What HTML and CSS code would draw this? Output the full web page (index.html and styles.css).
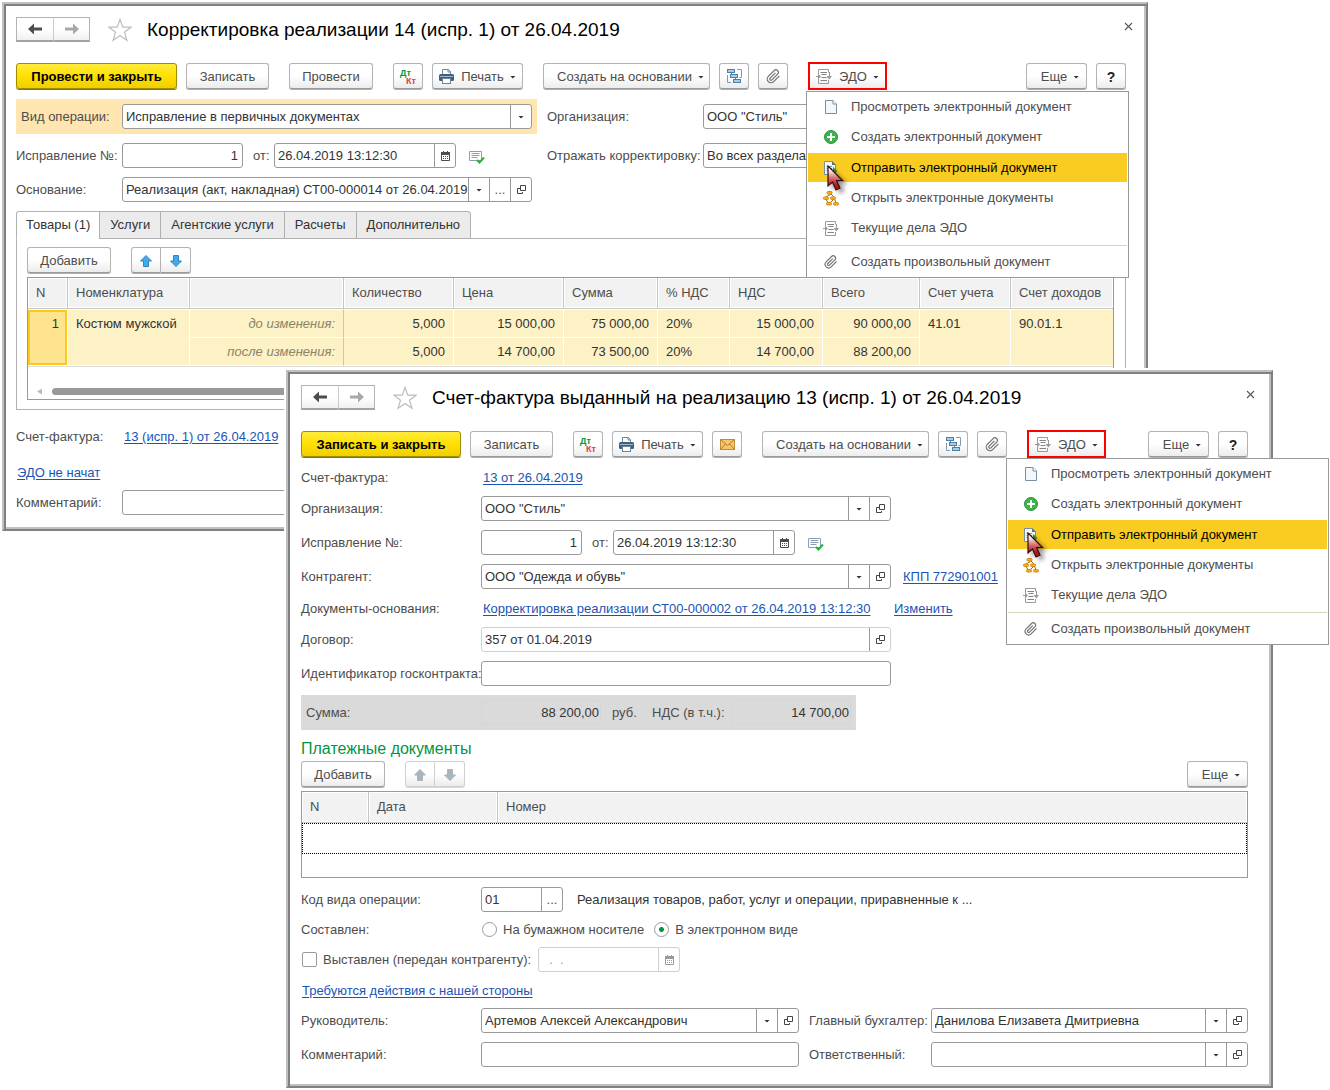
FILE: index.html
```html
<!DOCTYPE html>
<html lang="ru">
<head>
<meta charset="utf-8">
<meta name="viewport" content="width=device-width, initial-scale=1">
<title>Корректировка реализации</title>
<link rel="stylesheet" href="styles.css">
</head>
<body>
<svg class="sprite" aria-hidden="true">
  <symbol id="i-back" viewBox="0 0 14 12"><path d="M0 6 6 .5V4.500H14V7.500H6V11.500z" fill="currentColor"/></symbol>
  <symbol id="i-forward" viewBox="0 0 14 12"><path d="M14 6 8 .5V4.500H0V7.500H8V11.500z" fill="currentColor"/></symbol>
  <symbol id="i-star" viewBox="0 0 24 24"><path d="M12 1.500 14.800 9.200H23L16.500 14.200 18.900 22.200 12 17.400 5.100 22.200 7.500 14.200 1 9.200H9.200z" fill="#fff" stroke="#b9bdc1" stroke-width="1.200"/></symbol>
  <symbol id="i-close" viewBox="0 0 9 9"><path d="M1 1 8 8M8 1 1 8" stroke="#555" stroke-width="1.100"/></symbol>
  <symbol id="i-print" viewBox="0 0 15 15"><path d="M3.500 5V.5H9.500L11.500 2.500V5" fill="#fff" stroke="#6f8496"/><path d="M9 1V3H11.500" fill="none" stroke="#6f8496"/><rect x="0" y="5" width="15" height="7" rx="1.500" fill="#3a6287"/><rect x="1" y="7" width="13" height="1" fill="#9fb8cc"/><rect x="3.500" y="9.500" width="8" height="5" fill="#fff" stroke="#6f8496"/></symbol>
  <symbol id="i-tree" viewBox="0 0 15 15"><path d="M10 .5H14.500V8.500H12.500M.5 6V13.500H4" fill="none" stroke="#7d9cb3"/><path d="M4.500 4V6M8.500 9V11" stroke="#4e7fa5"/><rect x=".5" y=".5" width="7" height="3" fill="#a9cbe4" stroke="#4e7fa5"/><rect x="3.500" y="5.500" width="7" height="3" fill="#a9cbe4" stroke="#4e7fa5"/><rect x="6.500" y="10.500" width="7" height="3" fill="#a9cbe4" stroke="#4e7fa5"/></symbol>
  <symbol id="i-clip" viewBox="0 0 24 24"><path d="M21.440 11.050l-9.190 9.190a6 6 0 0 1-8.490-8.490l9.190-9.190a4 4 0 0 1 5.660 5.660l-9.200 9.190a2 2 0 0 1-2.830-2.830l8.490-8.480" fill="none" stroke="#6f6f6f" stroke-width="1.900"/></symbol>
  <symbol id="i-edo" viewBox="0 0 16 15"><path d="M2.500 5V.5H12.500V3.500M2.500 10V14.500H12.500V11" fill="none" stroke="#999"/><path d="M4.500 3.500H11M5.500 5.500H10.500M5.500 8.500H10.500M4.500 11.500H11" stroke="#858585"/><path d="M0 7.500H3M13.500 3V8" stroke="#999"/><path d="M2 4.500 5 7.500 2 10.500zM10.500 7H16L13.300 10.500z" fill="#999"/></symbol>
  <symbol id="i-mail" viewBox="0 0 15 11"><rect x=".5" y=".5" width="14" height="10" fill="#f6c56c" stroke="#c78a33"/><path d="M1 1 7.500 6.500 14 1M1 10 5.500 5M14 10 9.500 5" fill="none" stroke="#b87a28"/></symbol>
  <symbol id="i-cal" viewBox="0 0 9 10"><path d="M.5 2.500V9.500H8.500V2.500" fill="none" stroke="currentColor"/><path d="M0 1H9V4H0zM2 0H3V1H2zM6 0H7V1H6z" fill="currentColor"/><path d="M2 5.500H3M4 5.500H5M6 5.500H7M2 7.500H3M4 7.500H5M6 7.500H7" stroke="currentColor"/></symbol>
  <symbol id="i-list" viewBox="0 0 16 13"><path d="M.5.5H12.500V9.500H.5z" fill="#fff" stroke="#8a9fb3"/><path d="M2.500 2.500H10.500M2.500 4.500H10.500M2.500 6.500H8.500" stroke="#8a9fb3"/><path d="M8 9 10.500 11.500 15 6.500" fill="none" stroke="#2eae3c" stroke-width="2"/></symbol>
  <symbol id="i-open" viewBox="0 0 9 9"><path d="M3.500.5H8.500V5.500H3.500zM3.500 3.500H.5V8.500H5.500V7" fill="none" stroke="#444"/></symbol>
  <symbol id="i-up" viewBox="0 0 12 12"><path d="M6 .5 11.500 6H8.500V11.500H3.500V6H.5z" fill="var(--arrow)" stroke="var(--arrow-edge)"/></symbol>
  <symbol id="i-down" viewBox="0 0 12 12"><path d="M6 11.500 .5 6H3.500V.5H8.500V6H11.500z" fill="var(--arrow)" stroke="var(--arrow-edge)"/></symbol>
  <symbol id="i-doc" viewBox="0 0 12 14"><path d="M.5.5H8L11.500 4V13.500H.5z" fill="#f4f8fb" stroke="#7b8fa3"/><path d="M8 .5V4H11.500" fill="#fff" stroke="#7b8fa3"/></symbol>
  <symbol id="i-add" viewBox="0 0 14 14"><circle cx="7" cy="7" r="6.500" fill="#3db34c" stroke="#2b9639"/><path d="M7 3V11M3 7H11" stroke="#fff" stroke-width="2"/></symbol>
  <symbol id="i-send" viewBox="0 0 14 14"><path d="M.5.5H8L11.500 4V13.500H.5z" fill="#f4f8fb" stroke="#7b8fa3"/><path d="M8 0V4H12z" fill="#5e7388"/><path d="M2.500 5.500H8M2.500 7.500H8M2.500 9.500H8" stroke="#6c9ac0"/><path d="M9 6 13.500 10 9 13.500z" fill="#25a838"/></symbol>
  <symbol id="i-org" viewBox="0 0 16 15"><path d="M8 3 3 6M8 3 11 6M3 8 5 12M11 8 7 12M11.500 8 13 12" stroke="#9a6a1c" fill="none"/><g fill="#f9ae1b" stroke="#d98a0e"><rect x="4" y=".5" width="5" height="2.500" rx="1"/><rect x=".5" y="6" width="5" height="2.500" rx="1"/><rect x="7.500" y="6" width="5" height="2.500" rx="1"/><rect x="3.500" y="11.500" width="5" height="2.500" rx="1"/><rect x="10.500" y="11.500" width="5" height="2.500" rx="1"/></g></symbol>
  <symbol id="i-cursor" viewBox="0 0 24 32"><defs><linearGradient id="red" x1="0" y1="0" x2="0" y2="1"><stop offset=".15" stop-color="#fff"/><stop offset=".5" stop-color="#d87070"/><stop offset=".8" stop-color="#b01818"/></linearGradient></defs><path d="M1 1V21L5.500 17 9 25 13 23 9.500 15.500H15.500z" fill="url(#red)" stroke="#3a0a0a" stroke-width="1.200"/></symbol>
</svg>

<main class="desktop">

<section class="window window--back" aria-labelledby="t1">
  <header class="head">
    <div class="nav"><button type="button" aria-label="Назад"><svg width="14" height="12"><use href="#i-back"/></svg></button><button type="button" aria-label="Вперед" disabled><svg width="14" height="12"><use href="#i-forward"/></svg></button></div>
    <button type="button" class="plain star" aria-label="Избранное"><svg width="24" height="24"><use href="#i-star"/></svg></button>
    <h1 id="t1">Корректировка реализации 14 (испр. 1) от 26.04.2019</h1>
    <button type="button" class="plain close" aria-label="Закрыть"><svg width="9" height="9"><use href="#i-close"/></svg></button>
  </header>

  <div class="toolbar">
    <div class="group"><button type="button" class="btn btn--primary">Провести и закрыть</button><button type="button" class="btn btn--save">Записать</button></div>
    <button type="button" class="btn btn--text">Провести</button>
    <div class="group">
      <button type="button" class="btn btn--icon dtkt"><span>Дт</span><span>Кт</span></button>
      <button type="button" class="btn btn--print"><svg width="15" height="15"><use href="#i-print"/></svg>Печать<i class="caret"></i></button>
    </div>
    <div class="group">
      <button type="button" class="btn btn--create">Создать на основании<i class="caret"></i></button>
      <button type="button" class="btn btn--icon" aria-label="Структура"><svg width="15" height="15"><use href="#i-tree"/></svg></button>
      <button type="button" class="btn btn--icon" aria-label="Файлы"><svg width="15" height="15"><use href="#i-clip"/></svg></button>
    </div>
    <div class="edo">
      <button type="button" class="btn btn--edo"><svg width="16" height="15"><use href="#i-edo"/></svg>ЭДО<i class="caret"></i></button>
      <ul class="menu">
        <li><button type="button"><svg width="12" height="14"><use href="#i-doc"/></svg><span>Просмотреть электронный документ</span></button></li>
        <li><button type="button"><svg width="14" height="14"><use href="#i-add"/></svg><span>Создать электронный документ</span></button></li>
        <li class="current"><button type="button"><svg width="14" height="14"><use href="#i-send"/></svg><span>Отправить электронный документ</span></button><svg class="cursor" width="24" height="32"><use href="#i-cursor"/></svg></li>
        <li><button type="button"><svg width="16" height="15"><use href="#i-org"/></svg><span>Открыть электронные документы</span></button></li>
        <li><button type="button"><svg width="16" height="15"><use href="#i-edo"/></svg><span>Текущие дела ЭДО</span></button></li>
        <li class="apart"><button type="button"><svg width="14" height="14"><use href="#i-clip"/></svg><span>Создать произвольный документ</span></button></li>
      </ul>
    </div>
    <div class="group group--end"><button type="button" class="btn btn--more">Еще<i class="caret"></i></button><button type="button" class="btn btn--icon help">?</button></div>
  </div>

  <div class="row row--split">
    <div class="half half--band">
      <label for="kind">Вид операции:</label>
      <div class="field grow"><input id="kind" value="Исправление в первичных документах"><button type="button" aria-label="Выбрать"><i class="caret"></i></button></div>
    </div>
    <label class="side-label" for="org1">Организация:</label>
    <div class="field grow"><input id="org1" value='ООО "Стиль"'></div>
  </div>
  <div class="row row--split">
    <div class="half">
      <label for="num1">Исправление №:</label>
      <div class="field field--num1"><input id="num1" class="num" value="1"></div>
      <label class="from" for="date1">от:</label>
      <div class="field field--date"><input id="date1" value="26.04.2019 13:12:30"><button type="button" aria-label="Календарь"><svg width="9" height="10"><use href="#i-cal"/></svg></button></div>
      <button type="button" class="plain list" aria-label="Проверка"><svg width="16" height="13"><use href="#i-list"/></svg></button>
    </div>
    <label class="side-label" for="refl">Отражать корректировку:</label>
    <div class="field grow"><input id="refl" value="Во всех разделах учета"></div>
  </div>
  <div class="row">
    <div class="half">
      <label for="base">Основание:</label>
      <div class="field field--wide"><input id="base" value="Реализация (акт, накладная) СТ00-000014 от 26.04.2019"><button type="button" aria-label="Выбрать"><i class="caret"></i></button><button type="button">...</button><button type="button" aria-label="Открыть"><svg width="9" height="9"><use href="#i-open"/></svg></button></div>
    </div>
  </div>

  <div class="tabs">
    <div class="tablist" role="tablist">
      <button type="button" role="tab" aria-selected="true">Товары (1)</button>
      <button type="button" role="tab">Услуги</button>
      <button type="button" role="tab">Агентские услуги</button>
      <button type="button" role="tab">Расчеты</button>
      <button type="button" role="tab">Дополнительно</button>
    </div>
    <div class="panel">
      <div class="commands">
        <button type="button" class="btn btn--text">Добавить</button>
        <div class="pair"><button type="button" class="btn" aria-label="Вверх"><svg width="12" height="12"><use href="#i-up"/></svg></button><button type="button" class="btn" aria-label="Вниз"><svg width="12" height="12"><use href="#i-down"/></svg></button></div>
      </div>
      <div class="grid grid--goods">
        <table class="goods">
          <colgroup><col class="c40"><col class="c122"><col class="c154"><col class="c110"><col class="c110"><col class="c94"><col class="c72"><col class="c93"><col class="c97"><col class="c91"><col></colgroup>
          <thead><tr><th>N</th><th>Номенклатура</th><th></th><th>Количество</th><th>Цена</th><th>Сумма</th><th>% НДС</th><th>НДС</th><th>Всего</th><th>Счет учета</th><th>Счет доходов</th></tr></thead>
          <tbody>
            <tr><td rowspan="2" class="r picked">1</td><td rowspan="2">Костюм мужской</td><td class="stage">до изменения:</td><td class="r">5,000</td><td class="r">15 000,00</td><td class="r">75 000,00</td><td>20%</td><td class="r">15 000,00</td><td class="r">90 000,00</td><td rowspan="2">41.01</td><td rowspan="2">90.01.1</td></tr>
            <tr><td class="stage">после изменения:</td><td class="r">5,000</td><td class="r">14 700,00</td><td class="r">73 500,00</td><td>20%</td><td class="r">14 700,00</td><td class="r">88 200,00</td></tr>
          </tbody>
        </table>
        <div class="scroll"><i class="scroll-arrow"></i><div class="scroll-thumb"></div></div>
      </div>
    </div>
  </div>

  <div class="foot">
    <div class="row"><span class="label">Счет-фактура:</span><a href="#invoice">13 (испр. 1) от 26.04.2019</a></div>
    <div class="row row--edo"><a href="#edo">ЭДО не начат</a></div>
    <div class="row"><label for="note1">Комментарий:</label><div class="field grow"><input id="note1"></div></div>
  </div>
</section>

<section class="window window--front" aria-labelledby="t2">
  <header class="head">
    <div class="nav"><button type="button" aria-label="Назад"><svg width="14" height="12"><use href="#i-back"/></svg></button><button type="button" aria-label="Вперед" disabled><svg width="14" height="12"><use href="#i-forward"/></svg></button></div>
    <button type="button" class="plain star" aria-label="Избранное"><svg width="24" height="24"><use href="#i-star"/></svg></button>
    <h1 id="t2">Счет-фактура выданный на реализацию 13 (испр. 1) от 26.04.2019</h1>
    <button type="button" class="plain close" aria-label="Закрыть"><svg width="9" height="9"><use href="#i-close"/></svg></button>
  </header>

  <div class="toolbar">
    <div class="group"><button type="button" class="btn btn--primary">Записать и закрыть</button><button type="button" class="btn btn--save">Записать</button></div>
    <div class="group">
      <button type="button" class="btn btn--icon dtkt"><span>Дт</span><span>Кт</span></button>
      <button type="button" class="btn btn--print"><svg width="15" height="15"><use href="#i-print"/></svg>Печать<i class="caret"></i></button>
      <button type="button" class="btn btn--icon" aria-label="Письмо"><svg width="15" height="11"><use href="#i-mail"/></svg></button>
    </div>
    <div class="group">
      <button type="button" class="btn btn--create">Создать на основании<i class="caret"></i></button>
      <button type="button" class="btn btn--icon" aria-label="Структура"><svg width="15" height="15"><use href="#i-tree"/></svg></button>
      <button type="button" class="btn btn--icon" aria-label="Файлы"><svg width="15" height="15"><use href="#i-clip"/></svg></button>
    </div>
    <div class="edo">
      <button type="button" class="btn btn--edo"><svg width="16" height="15"><use href="#i-edo"/></svg>ЭДО<i class="caret"></i></button>
      <ul class="menu">
        <li><button type="button"><svg width="12" height="14"><use href="#i-doc"/></svg><span>Просмотреть электронный документ</span></button></li>
        <li><button type="button"><svg width="14" height="14"><use href="#i-add"/></svg><span>Создать электронный документ</span></button></li>
        <li class="current"><button type="button"><svg width="14" height="14"><use href="#i-send"/></svg><span>Отправить электронный документ</span></button><svg class="cursor" width="24" height="32"><use href="#i-cursor"/></svg></li>
        <li><button type="button"><svg width="16" height="15"><use href="#i-org"/></svg><span>Открыть электронные документы</span></button></li>
        <li><button type="button"><svg width="16" height="15"><use href="#i-edo"/></svg><span>Текущие дела ЭДО</span></button></li>
        <li class="apart"><button type="button"><svg width="14" height="14"><use href="#i-clip"/></svg><span>Создать произвольный документ</span></button></li>
      </ul>
    </div>
    <div class="group group--end"><button type="button" class="btn btn--more">Еще<i class="caret"></i></button><button type="button" class="btn btn--icon help">?</button></div>
  </div>

  <div class="row row--link"><span class="label">Счет-фактура:</span><a href="#source">13 от 26.04.2019</a></div>
  <div class="row"><label for="org2">Организация:</label><div class="field field--wide"><input id="org2" value='ООО "Стиль"'><button type="button" aria-label="Выбрать"><i class="caret"></i></button><button type="button" aria-label="Открыть"><svg width="9" height="9"><use href="#i-open"/></svg></button></div></div>
  <div class="row">
    <label for="num2">Исправление №:</label>
    <div class="field field--num2"><input id="num2" class="num" value="1"></div>
    <label class="from" for="date2">от:</label>
    <div class="field field--date"><input id="date2" value="26.04.2019 13:12:30"><button type="button" aria-label="Календарь"><svg width="9" height="10"><use href="#i-cal"/></svg></button></div>
    <button type="button" class="plain list" aria-label="Проверка"><svg width="16" height="13"><use href="#i-list"/></svg></button>
  </div>
  <div class="row"><label for="party">Контрагент:</label><div class="field field--wide"><input id="party" value='ООО "Одежда и обувь"'><button type="button" aria-label="Выбрать"><i class="caret"></i></button><button type="button" aria-label="Открыть"><svg width="9" height="9"><use href="#i-open"/></svg></button></div><a class="after" href="#kpp">КПП 772901001</a></div>
  <div class="row row--link"><span class="label">Документы-основания:</span><a class="basis" href="#basis">Корректировка реализации СТ00-000002 от 26.04.2019 13:12:30</a><a href="#change">Изменить</a></div>
  <div class="row"><label for="deal">Договор:</label><div class="field field--wide field--soft"><input id="deal" value="357 от 01.04.2019" readonly><button type="button" aria-label="Открыть"><svg width="9" height="9"><use href="#i-open"/></svg></button></div></div>
  <div class="row"><label for="gos">Идентификатор госконтракта:</label><div class="field field--wide"><input id="gos"></div></div>
  <div class="totals">
    <label for="sum">Сумма:</label><input id="sum" value="88 200,00" readonly><span class="rub">руб.</span><label class="vat" for="vat">НДС (в т.ч.):</label><input id="vat" value="14 700,00" readonly>
  </div>

  <div class="payments">
    <h2>Платежные документы</h2>
    <div class="commands">
      <button type="button" class="btn btn--text">Добавить</button>
      <div class="pair"><button type="button" class="btn" aria-label="Вверх" disabled><svg width="12" height="12"><use href="#i-up"/></svg></button><button type="button" class="btn" aria-label="Вниз" disabled><svg width="12" height="12"><use href="#i-down"/></svg></button></div>
      <button type="button" class="btn btn--more end">Еще<i class="caret"></i></button>
    </div>
    <div class="grid grid--pay">
      <table>
        <colgroup><col class="c67"><col class="c129"><col></colgroup>
        <thead><tr><th>N</th><th>Дата</th><th>Номер</th></tr></thead>
        <tbody><tr><td class="focus" colspan="3"></td></tr></tbody>
      </table>
    </div>
  </div>

  <div class="row"><label for="code">Код вида операции:</label><div class="field field--code"><input id="code" value="01"><button type="button">...</button></div><span class="hint">Реализация товаров, работ, услуг и операции, приравненные к ...</span></div>
  <div class="row row--radio"><span class="label">Составлен:</span>
    <input type="radio" name="form" id="paper"><label for="paper">На бумажном носителе</label>
    <input type="radio" name="form" id="electro" checked><label for="electro">В электронном виде</label></div>
  <div class="row row--check"><input type="checkbox" id="issued"><label for="issued">Выставлен (передан контрагенту):</label>
    <div class="field field--issued field--soft"><input aria-label="Дата выставления" value="&#160;&#160;.&#160;&#160;." disabled><button type="button" aria-label="Календарь" disabled><svg width="9" height="10"><use href="#i-cal"/></svg></button></div></div>
  <div class="row row--action"><a href="#actions">Требуются действия с нашей стороны</a></div>
  <div class="row">
    <label for="boss">Руководитель:</label><div class="field field--person"><input id="boss" value="Артемов Алексей Александрович"><button type="button" aria-label="Выбрать"><i class="caret"></i></button><button type="button" aria-label="Открыть"><svg width="9" height="9"><use href="#i-open"/></svg></button></div>
    <label class="second" for="acc">Главный бухгалтер:</label><div class="field grow"><input id="acc" value="Данилова Елизавета Дмитриевна"><button type="button" aria-label="Выбрать"><i class="caret"></i></button><button type="button" aria-label="Открыть"><svg width="9" height="9"><use href="#i-open"/></svg></button></div>
  </div>
  <div class="row">
    <label for="note2">Комментарий:</label><div class="field field--person"><input id="note2"></div>
    <label class="second" for="resp">Ответственный:</label><div class="field grow"><input id="resp"><button type="button" aria-label="Выбрать"><i class="caret"></i></button><button type="button" aria-label="Открыть"><svg width="9" height="9"><use href="#i-open"/></svg></button></div>
  </div>
</section>

</main>
</body>
</html>
```
FILE: styles.css
```css
* { box-sizing: border-box; }

body {
  margin: 0;
  background: #fff;
  color: #4d4d4d;
  font: 13px/16px "Liberation Sans", Arial, sans-serif;
  --arrow: #3fabec;
  --arrow-edge: #3585b8;
}

button, input { font: inherit; color: inherit; margin: 0; }
button { padding: 0; white-space: nowrap; }
svg { display: block; flex: none; }
label, .label { white-space: nowrap; flex: none; }
a { color: #1a55b5; text-decoration: underline; text-underline-offset: 2px; white-space: nowrap; }
.sprite { position: absolute; width: 0; height: 0; }

/* Windows on the desktop */
.desktop { position: relative; min-width: 1330px; min-height: 1088px; }

.window {
  position: absolute;
  display: flex;
  flex-direction: column;
  gap: 9px;
  background: #fff;
  border: 2px solid;
  border-color: #c0c0c0 #808080 #808080 #c0c0c0;
  box-shadow: inset 2px 2px #808080, inset -2px -2px #c0c0c0;
}
.window--back { left: 2px; right: 182px; top: 2px; padding: 13px 20px 14px 12px; --label: 106px; --primary: 161px; }
.window--front { left: 286px; right: 57px; top: 370px; padding: 13px 23px 19px 13px; --label: 180px; --primary: 160px; outline: 2px solid #fff; }

.head { display: flex; align-items: center; height: 25px; margin: 0 -7px 12px 0; }
.nav { display: flex; }
.nav button {
  display: flex; align-items: center; justify-content: center;
  width: 38px; height: 25px;
  border: 1px solid #b3b3b3; border-bottom: 2px solid #a3a3a3;
  background: linear-gradient(#fff 50%, #f0f0f0);
}
.nav button + button { margin-left: -1px; width: 37px; border-left-color: #ccc; color: #a8a8a8; }
.plain { border: 0; background: none; }
.star { margin: 0 15px 0 18px; }
.close { margin: 0 0 6px auto; }
h1 { margin: 0; font-size: 19px; line-height: 24px; font-weight: 400; color: #000; white-space: nowrap; }

/* Command bar */
.toolbar { display: flex; gap: 20px; height: 27px; }
.group { display: flex; gap: 9px; }
.group--end { margin-left: auto; }
.btn {
  display: flex; align-items: center; justify-content: center; flex: none;
  height: 26px;
  padding-top: 1px;
  border: 1px solid #b3b3b3; border-bottom-color: #999; border-radius: 3px;
  background: linear-gradient(#fff 50%, #ececec);
  box-shadow: 0 1px #b0b0b0;
}
.btn--text { min-width: 84px; }
.btn--save { min-width: 83px; }
.btn--primary {
  min-width: var(--primary);
  font-weight: 700; color: #000;
  background: linear-gradient(#ffec3d, #ffe000 50%, #f0cf00);
  border-color: #a08c00; box-shadow: 0 1px #8c7a00;
}
.btn--icon { width: 30px; }
.btn--print { width: 91px; }
.btn--print svg { margin-right: 7px; }
.btn--create { width: 167px; padding-left: 8px; }
.btn--more { width: 61px; padding-left: 7px; }
.help { font-size: 14px; font-weight: 700; color: #222; }
.caret { flex: none; width: 6px; height: 3px; margin: 1px 0 0 6px; background: #333; clip-path: polygon(0 0, 100% 0, 50% 100%); }

.dtkt { flex-direction: column; align-items: flex-start; padding-left: 6px; font-size: 9px; line-height: 8px; font-weight: 700; color: #00963f; }
.dtkt span + span { margin-left: 6px; color: #e04040; }

.edo { position: relative; margin-top: -1px; }
.btn--edo { width: 79px; height: 28px; border: 2px solid #f00; border-radius: 0; box-shadow: none; }
.btn--edo svg { margin-right: 7px; }

.menu {
  position: absolute; z-index: 5; top: 29px; left: -2px;
  width: 323px; margin: 0; padding: 0 1px;
  list-style: none; background: #fff; border: 1px solid #999;
}
.window--front .menu { top: 28px; left: -21px; }
.menu li { position: relative; height: 30px; }
.menu button { display: flex; align-items: center; width: 100%; height: 30px; border: 0; background: none; text-align: left; }
.menu button svg { width: 46px; }
.menu span { margin-left: -3px; }
.menu .current button { height: 29px; margin-top: 1px; background: #facb20; color: #000; }
.menu .apart { height: 32px; margin-top: 2px; padding-top: 1px; border-top: 1px solid #d9d5bd; }
.menu .cursor { position: absolute; z-index: 1; left: 19px; top: 12px; filter: drop-shadow(4px 3px 2px rgba(0, 0, 0, .4)); }

/* Form rows */
.row { display: flex; align-items: center; min-height: 25px; }
.row > label:first-child, .row > .label, .half > label:first-child { width: var(--label); }
.row--link { min-height: 20px; padding-top: 2px; }
.row > .label + a { margin-left: 2px; }
.grow { flex: 1; }
.half { display: flex; align-items: center; width: 521px; margin-right: 10px; flex: none; }
.half--band { height: 35px; padding: 0 5px; background: #ffe5b0; }
.half--band > label:first-child { width: 101px; }
.side-label { width: 156px; }
.from { width: 21px; margin-left: 10px; }
.list { margin: 3px 0 0 13px; }

.field { display: flex; height: 25px; border: 1px solid #999; border-radius: 3px; background: #fff; overflow: hidden; }
.field input { flex: 1; width: 0; min-width: 0; padding: 0 0 0 3px; border: 0; background: none; color: #333; outline: 0; }
.field .num { text-align: right; padding-right: 4px; }
.field button { display: flex; align-items: center; justify-content: center; width: 21px; flex: none; border: 0; border-left: 1px solid #999; background: none; }
.field .caret { margin-left: 0; }
.field--soft { border-color: #d0d0d0; }
.field--num1 { width: 121px; }
.field--num2 { width: 101px; }
.field--date { width: 182px; }
.field--wide { width: 410px; }
.field--code { width: 82px; }
.field--person { width: 318px; }
.field--issued { width: 142px; color: #999; }
.field--issued input { color: #999; }
.field--issued button { border-color: #d0d0d0; }
.after { margin-left: 12px; }
.basis { width: 411px; }
.hint { margin-left: 14px; color: #333; white-space: nowrap; }
.second { width: 132px; padding-left: 10px; }

/* Tabs and tables */
.tablist { display: flex; }
.tablist button { height: 28px; margin: 0 0 -1px -1px; padding: 0 10px; border: 1px solid #b0b0b0; background: #ebebeb; color: #333; }
.tablist button:first-child { margin-left: 0; padding: 0 9px; border-radius: 3px 0 0 0; border-bottom-color: #fff; background: #fff; }
.tablist button:last-child { border-radius: 0 3px 0 0; }
.panel { padding: 8px 11px 9px 10px; border: 1px solid #b0b0b0; }
.commands { display: flex; gap: 20px; height: 27px; margin-bottom: 3px; }
.pair { display: flex; }
.pair .btn { width: 30px; border-radius: 3px 0 0 3px; }
.pair .btn + .btn { border-left: 0; border-radius: 0 3px 3px 0; }
.pair .btn:disabled { border-color: #d0d0d0; box-shadow: 0 1px #d8d8d8; --arrow: #a9b5bd; --arrow-edge: #a9b5bd; }
.end { margin-left: auto; }

.grid { border: 1px solid #999; }
.grid--goods { min-height: 123px; }
.grid--pay { min-height: 87px; }
table { width: 100%; table-layout: fixed; border-spacing: 0; border-collapse: separate; }
th, td { padding: 0 8px; text-align: left; white-space: nowrap; }
th { height: 31px; font-weight: 400; background: #f2f2f2; border-right: 1px solid #c6c6c6; border-bottom: 1px solid #c6c6c6; box-shadow: inset 1px 1px #fff, inset -1px -1px #fff; }
th:last-child { border-right: 0; }
.goods { border-bottom: 1px solid #ddd; }
.goods td { height: 28px; padding-top: 6px; vertical-align: top; background: #fdf1c6; color: #333; border-right: 1px solid #fff; border-bottom: 1px solid #fff; }
.goods tbody tr:first-child td { height: 29px; border-top: 1px solid #fff; }
.goods td:last-child { border-right-color: #fdf1c6; }
.goods tbody tr + tr td:last-child { border-right-color: #fff; }
.goods .r, .goods .stage { text-align: right; }
.goods .stage { font-style: italic; color: #8b8467; border-right-color: #c6c6c6; }
.goods .picked { background: #ffe48f; box-shadow: inset 0 0 0 2px #fbc91f; }
.c40 { width: 40px; } .c67 { width: 67px; } .c72 { width: 72px; } .c91 { width: 91px; } .c93 { width: 93px; } .c94 { width: 94px; }
.c97 { width: 97px; } .c110 { width: 110px; } .c122 { width: 122px; } .c129 { width: 129px; } .c154 { width: 154px; }
.focus { height: 31px; border: 1px dotted #000; }
.scroll { display: flex; align-items: center; gap: 10px; height: 7px; margin: 21px 24px 0 9px; }
.scroll-arrow { width: 5px; height: 6px; background: #bbb; clip-path: polygon(100% 0, 100% 100%, 0 50%); }
.scroll-thumb { flex: 1; height: 7px; border-radius: 4px; background: #999; }

.foot { display: flex; flex-direction: column; gap: 9px; margin-top: 5px; }
.row--edo { min-height: 23px; padding: 6px 0 0 1px; }

/* Totals and payments */
.totals { display: flex; align-items: center; width: 555px; height: 35px; padding-left: 5px; background: #dadada; }
.totals label { width: 175px; }
.totals .vat { width: 79px; }
.totals input { width: 120px; height: 25px; padding: 0 1px; border: 1px solid #d5d5d5; border-radius: 3px; background: none; text-align: right; color: #333; outline: 0; }
.rub { width: 51px; padding-left: 11px; }
h2 { margin: 0 0 3px; padding-top: 1px; font-size: 16px; line-height: 18px; font-weight: 400; color: #00963f; }

.row--radio { min-height: 17px; }
input[type="radio"], input[type="checkbox"] { appearance: none; flex: none; width: 15px; height: 15px; border: 1px solid #999; background: #fff; }
input[type="radio"] { margin: 0 6px 0 1px; border-radius: 50%; }
input[type="radio"]:checked { background: radial-gradient(circle, #00963f 0 2px, #fff 3px); }
.row--radio label { margin-right: 9px; }
input[type="checkbox"] { margin: 0 6px 0 1px; border-radius: 2px; }
.row--check label { width: 215px; }
.row--action { min-height: 18px; padding: 2px 0 0 1px; }
```
